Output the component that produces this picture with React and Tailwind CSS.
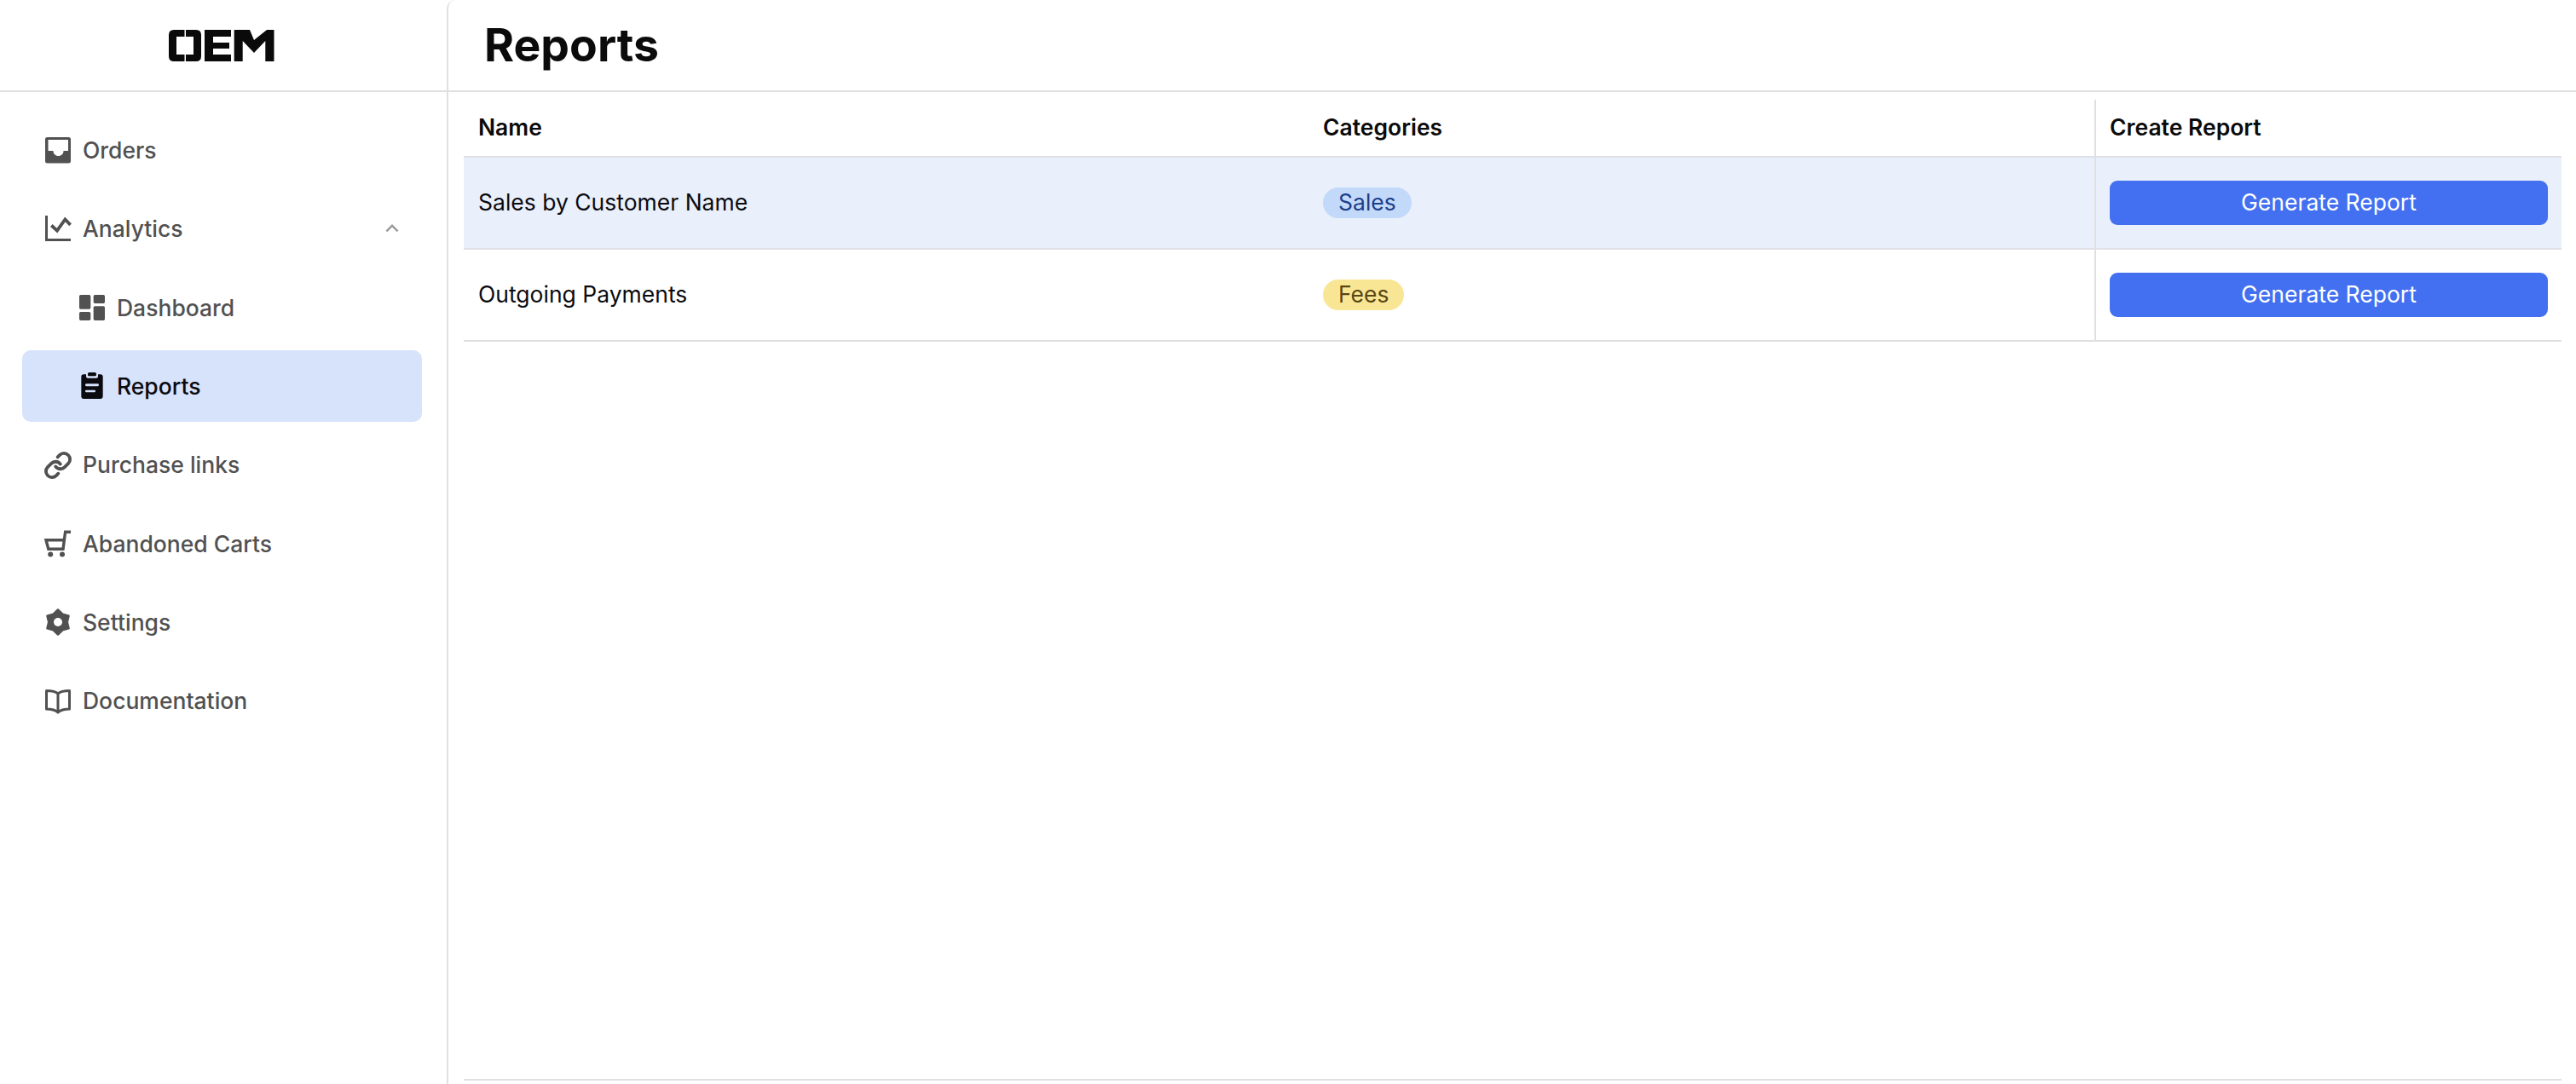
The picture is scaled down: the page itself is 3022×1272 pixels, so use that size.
import { Link } from 'lucide-react'
import { MdKeyboardArrowUp } from 'react-icons/md'

// Logo is drawn by hand, the letters are stencil shapes
function Logo() {
  return (
    <svg width="124" height="37" viewBox="0 0 124 37" fill="#0a0a0a">
      <path d="M18.5 0H6Q0 0 0 6V31Q0 37 6 37H18.5V29H9V8H18.5Z" />
      <path d="M20 0H32Q38 0 38 6V31Q38 37 32 37H20V29H29V8H20Z" />
      <path d="M42 0H73V8H52V15H71V22H52V29H73V37H42Z" />
      <path d="M76.7 0H95L100 12L115 0H123.5V37H113.3V13L100 27L86.7 13V37H76.7Z" />
    </svg>
  )
}

function OrdersIcon() {
  return (
    <svg width="40" height="40" viewBox="0 0 40 40" fill="currentColor">
      <path
        fillRule="evenodd"
        d="M7.5 5H32.5Q35 5 35 7.5V33Q35 35.5 32.5 35.5H7.5Q5 35.5 5 33V7.5Q5 5 7.5 5ZM8.5 8V21H14.5C14.5 24.5 17 27 20.5 27S26.5 24.5 26.5 21H32V8Z"
      />
    </svg>
  )
}

function AnalyticsIcon() {
  return (
    <svg width="40" height="40" viewBox="0 0 40 40" fill="none" stroke="currentColor" strokeWidth="3">
      <path d="M6.5 5V33.5H35" />
      <path d="M12.3 16.5L19 22.7L28.4 9.5L34.6 15.8" strokeWidth="3.8" />
    </svg>
  )
}

function DashboardIcon() {
  return (
    <svg width="40" height="40" viewBox="0 0 24 24" fill="currentColor">
      <path d="M4 13h6c.55 0 1-.45 1-1V4c0-.55-.45-1-1-1H4c-.55 0-1 .45-1 1v8c0 .55.45 1 1 1zm0 8h6c.55 0 1-.45 1-1v-4c0-.55-.45-1-1-1H4c-.55 0-1 .45-1 1v4c0 .55.45 1 1 1zm10 0h6c.55 0 1-.45 1-1v-8c0-.55-.45-1-1-1h-6c-.55 0-1 .45-1 1v8c0 .55.45 1 1 1zM13 4v4c0 .55.45 1 1 1h6c.55 0 1-.45 1-1V4c0-.55-.45-1-1-1h-6c-.55 0-1 .45-1 1z" />
    </svg>
  )
}

function ReportsIcon() {
  return (
    <svg width="40" height="40" viewBox="0 0 24 24" fill="currentColor">
      <rect x="9" y="2.4" width="6" height="2.6" rx="1" />
      <path
        fillRule="evenodd"
        d="M6 3.8h1.8v1.4c0 .7.6 1.2 1.2 1.2h6c.6 0 1.2-.5 1.2-1.2V3.8H18c.9 0 1.6.7 1.6 1.6v14c0 .9-.7 1.6-1.6 1.6H6c-.9 0-1.6-.7-1.6-1.6v-14c0-.9.7-1.6 1.6-1.6zM8 10.4c-.5 0-.8.4-.8.9s.3.8.8.8h8c.5 0 .8-.3.8-.8s-.3-.9-.8-.9zM8 14.9c-.5 0-.8.3-.8.7s.3.8.8.8h5.6c.5 0 .8-.3.8-.8s-.3-.7-.8-.7z"
      />
    </svg>
  )
}

function CartIcon() {
  return (
    <svg width="40" height="40" viewBox="0 0 40 40" fill="none" stroke="currentColor" strokeWidth="3.4">
      <path d="M35 6.3H28.6L26 26.3H8.8L6 15.7H27" />
      <circle cx="11.2" cy="32.6" r="3" fill="currentColor" stroke="none" />
      <circle cx="25" cy="32.6" r="3" fill="currentColor" stroke="none" />
    </svg>
  )
}

const gearPoints = Array.from({ length: 12 }, (_, i) => {
  const r = i % 2 === 0 ? 14.5 : 10.8
  const a = (i * Math.PI) / 6 - Math.PI / 2
  return `${20 + r * Math.cos(a)},${20 + r * Math.sin(a)}`
}).join(' ')

function SettingsIcon() {
  return (
    <svg width="40" height="40" viewBox="0 0 40 40" fill="currentColor">
      <polygon points={gearPoints} stroke="currentColor" strokeWidth="2.5" strokeLinejoin="round" />
      <circle cx="20" cy="20" r="5" fill="#fff" />
    </svg>
  )
}

function BookIcon() {
  return (
    <svg width="40" height="40" viewBox="0 0 40 40" fill="none" stroke="currentColor" strokeWidth="3" strokeLinejoin="round">
      <path d="M20 11C17 8 11 7.5 6.5 7.5V29C11 29 17 30 20 33C23 30 29 29 33.5 29V7.5C29 7.5 23 8 20 11ZM20 11V33" />
    </svg>
  )
}

function NavItem({ icon, label, sub, active, chevron }) {
  return (
    <div
      className={`flex items-center h-[84px] rounded-[10px] ${sub ? 'pl-[62px]' : 'pl-[22px]'} ${
        active ? 'bg-[#d7e2fb] text-[#0b0b0f]' : 'text-[#515151]'
      }`}
    >
      <span className="flex items-center justify-center w-[40px] h-[40px] shrink-0">{icon}</span>
      <span className="ml-[9px] text-[26.5px] font-medium leading-none">{label}</span>
      {chevron && (
        <span className="ml-auto mr-[20px] text-[#9a9a9a]">
          <MdKeyboardArrowUp size={30} />
        </span>
      )}
    </div>
  )
}

function Sidebar() {
  return (
    <aside className="w-[524px] shrink-0 flex flex-col">
      <div className="h-[108px] flex items-center justify-center pr-[4px] border-b-2 border-[#e0e0e0] shrink-0">
        <Logo />
      </div>
      <nav className="flex flex-col gap-[8.4px] pt-[26px] pl-[26px] pr-[29px]">
        <NavItem icon={<OrdersIcon />} label="Orders" />
        <NavItem icon={<AnalyticsIcon />} label="Analytics" chevron />
        <NavItem icon={<DashboardIcon />} label="Dashboard" sub />
        <NavItem icon={<ReportsIcon />} label="Reports" sub active />
        <NavItem icon={<Link size={34} strokeWidth={2.7} />} label="Purchase links" />
        <NavItem icon={<CartIcon />} label="Abandoned Carts" />
        <NavItem icon={<SettingsIcon />} label="Settings" />
        <NavItem icon={<BookIcon />} label="Documentation" />
      </nav>
    </aside>
  )
}

const reports = [
  {
    name: 'Sales by Customer Name',
    tag: 'Sales',
    tagClass: 'bg-[#c3d9fa] text-[#1c3f8a]',
    rowClass: 'bg-[#e9effb] border-[#e0e1e8]',
  },
  {
    name: 'Outgoing Payments',
    tag: 'Fees',
    tagClass: 'bg-[#f9e695] text-[#574613]',
    rowClass: 'border-[#e0e0e0]',
  },
]

function ReportRow({ report }) {
  return (
    <div className={`flex h-[108px] border-b-2 text-[26.5px] text-[#0b0b0f] ${report.rowClass}`}>
      <div className="w-[990px] pl-[17px] flex items-center">{report.name}</div>
      <div className="flex-1 pl-[18px] flex items-center">
        <span className={`h-[36px] px-[18px] rounded-full flex items-center text-[26.5px] ${report.tagClass}`}>
          {report.tag}
        </span>
      </div>
      <div className="w-[548px] border-l-2 border-[#e0e0e0] pl-[16px] pr-[16px] flex items-center">
        <button className="w-full h-[52px] rounded-[9px] bg-[#4370f0] text-white text-[26.5px]">
          Generate Report
        </button>
      </div>
    </div>
  )
}

export default function App() {
  return (
    <div className="flex w-full h-screen bg-white font-['Inter',sans-serif] overflow-hidden">
      <Sidebar />
      <main className="flex-1 min-w-0 flex flex-col border-l-2 border-[#e0e0e0] rounded-tl-[10px]">
        <header className="h-[108px] shrink-0 flex items-center pl-[42px] border-b-2 border-[#e0e0e0]">
          <h1 className="text-[53.5px] font-bold leading-none text-[#0b0b0b]">Reports</h1>
        </header>
        <div className="flex-1 min-h-0 ml-[18px] mr-[17px] mb-[4px] flex flex-col border-b-2 border-[#e0e0e0]">
          <div className="flex h-[77px] pt-[9px] border-b-2 border-[#e0e1e8] text-[26.5px] font-semibold text-[#0b0b0b]">
            <div className="w-[990px] pl-[17px] flex items-center">Name</div>
            <div className="flex-1 pl-[18px] flex items-center">Categories</div>
            <div className="w-[548px] border-l-2 border-[#e0e0e0] pl-[16px] flex items-center">Create Report</div>
          </div>
          {reports.map((r) => (
            <ReportRow key={r.name} report={r} />
          ))}
        </div>
      </main>
    </div>
  )
}
